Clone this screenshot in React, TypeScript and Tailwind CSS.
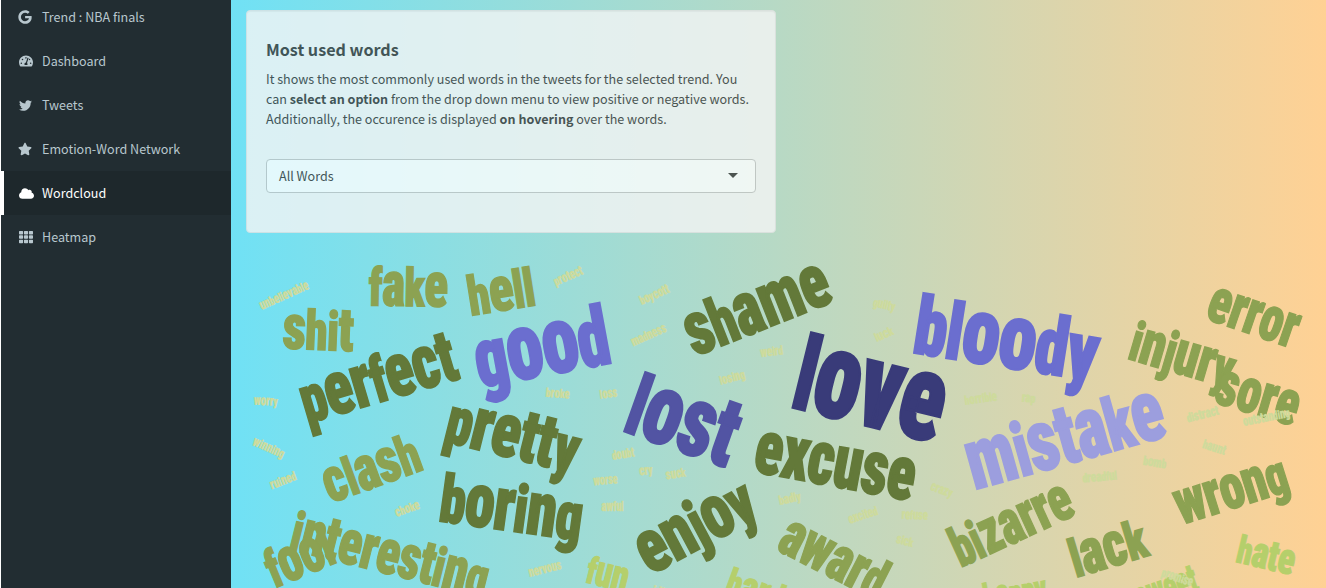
import React, { useLayoutEffect, useRef } from "react";
import { FaGoogle, FaTachometerAlt, FaTwitter, FaStar, FaCloud, FaTh } from "react-icons/fa";

const items = [
  { icon: FaGoogle, label: "Trend : NBA finals", iconClass: "h-[14px] w-[14px] mr-[10px] -ml-px" },
  { icon: FaTachometerAlt, label: "Dashboard", iconClass: "h-[14px] w-[14px] mr-[9px]" },
  { icon: FaTwitter, label: "Tweets", iconClass: "h-[13px] w-[13px] mr-[10px]" },
  { icon: FaStar, label: "Emotion-Word Network", iconClass: "h-[14px] w-[14px] mr-[10px] -ml-px" },
  { icon: FaCloud, label: "Wordcloud", active: true, iconClass: "h-[15px] w-[15px] mr-2" },
  { icon: FaTh, label: "Heatmap", iconClass: "h-[14px] w-[14px] mr-[9px]" },
];

// text, baseline start x / y, rotation in degrees, word length, ascender height, colour
type Word = [string, number, number, number, number, number, string];

const NAVY = "#393b79";
const INDIGO = "#5254a3";
const VIOLET = "#6b6ecf";
const LILAC = "#9c9ede";
const OLIVE = "#637939";
const MOSS = "#8ca252";
const LIME = "#b5cf6b";
const PALE = "#cedb9c";

const words: Word[] = [
  ["love", 791, 408.3, 13.8, 146, 78, NAVY],
  ["lost", 622.7, 432, 19.5, 108, 63.7, INDIGO],
  ["good", 481.9, 388, -10.5, 133, 60, VIOLET],
  ["bloody", 913, 353.7, 8.9, 182, 59.3, VIOLET],
  ["mistake", 976, 490.3, -15.6, 200, 55, LILAC],
  ["perfect", 309, 424, -16.5, 158, 48.5, OLIVE],
  ["shame", 696.3, 356.7, -21.5, 149, 48.5, OLIVE],
  ["pretty", 443.5, 442, 14, 132, 48.5, OLIVE],
  ["excuse", 753, 472.3, 10.5, 159, 48.5, OLIVE],
  ["boring", 439, 522, 7.8, 141, 48.5, OLIVE],
  ["enjoy", 651.5, 575.5, -28, 124, 48.5, OLIVE],
  ["fake", 370, 306, 1, 77, 40, MOSS],
  ["shit", 283.3, 349, 2.3, 69, 40, MOSS],
  ["hell", 472.3, 316, -9, 65, 40, MOSS],
  ["error", 1205, 319.2, 19, 90, 40, MOSS],
  ["injury", 1127.3, 359.3, 16.4, 104.5, 40, MOSS],
  ["sore", 1213.5, 403, 16.5, 82, 40, MOSS],
  ["clash", 331.8, 503.7, -20, 98.5, 40, MOSS],
  ["interesting", 289, 550, 14, 199, 40, MOSS],
  ["fool", 276, 588.5, -22.5, 67, 40, MOSS],
  ["award", 776, 550.5, 27, 111, 40, MOSS],
  ["bizarre", 962.3, 567.7, -24.6, 126, 40, MOSS],
  ["lack", 1077.3, 578, -16.8, 76, 40, MOSS],
  ["wrong", 1182.7, 525.2, -17.5, 113, 40, MOSS],
  ["hate", 1235.7, 562.3, 13.4, 57, 28, LIME],
  ["fun", 585, 582.7, 14, 41, 28, LIME],
  ["happy", 987, 612, -10, 62, 28, LIME],
  ["hard", 724, 594, 20, 57, 28, LIME],
  ["sweet", 1142, 612, -19, 62, 28, LIME],
  ["unbelievable", 262, 310, -24, 52, 9, PALE],
  ["worry", 254, 405, 2, 23.5, 9, PALE],
  ["winning", 252, 445, 24, 33, 9, PALE],
  ["ruined", 272, 489.5, -21, 27, 9, PALE],
  ["choke", 397, 517, -20, 25, 9, PALE],
  ["protect", 556, 286, -23, 30, 9, PALE],
  ["boycott", 642, 305, -24, 31, 9, PALE],
  ["madness", 633.5, 346.5, -24, 37, 9, PALE],
  ["broke", 545.7, 397, 4, 23.5, 9, PALE],
  ["loss", 600.7, 399, -8, 17, 9, PALE],
  ["doubt", 613, 460, -9, 22, 9, PALE],
  ["cry", 640, 475.7, -8, 13, 9, PALE],
  ["suck", 666.7, 479.5, -9, 19.5, 9, PALE],
  ["worse", 594, 485.5, -5, 24, 9, PALE],
  ["awful", 601.5, 511, 0, 22, 9, PALE],
  ["nervous", 530, 577, -14, 33, 9, PALE],
  ["idiot", 652, 594, 14, 22, 9, PALE],
  ["guilty", 872.7, 306.5, 13, 22, 9, PALE],
  ["luck", 877, 342, -24, 19, 9, PALE],
  ["weird", 761, 357.3, -7, 22.5, 9, PALE],
  ["losing", 721, 385, -15, 25.5, 9, PALE],
  ["badly", 780, 505, -12, 22, 9, PALE],
  ["excited", 850, 524, -18, 30, 9, PALE],
  ["refuse", 901.7, 519, 2, 26, 9, PALE],
  ["sick", 895.7, 543, 14, 17, 9, PALE],
  ["crazy", 930, 490, 20, 22, 9, PALE],
  ["horrible", 965.7, 405, -8, 32, 9, PALE],
  ["rap", 1021.7, 402, 4, 13, 9, PALE],
  ["dreadful", 1083, 482.7, -5, 34, 9, PALE],
  ["bomb", 1142.7, 465, 9, 23, 9, PALE],
  ["haunt", 1202, 448, 18, 23, 9, PALE],
  ["distract", 1188, 422.5, -14, 32, 9, PALE],
  ["outstanding", 1244, 426, -11, 47, 9, PALE],
  ["promise", 1160.7, 576.5, 18, 32, 9, PALE],
];

// Evens out ascenders and descenders against a tall x-height.
function letterScale(ch: string) {
  if ("lfk".includes(ch)) return 0.84;
  if ("bdhi".includes(ch)) return 0.87;
  if ("gpyj".includes(ch)) return 0.88;
  if (ch === "t") return 0.97;
  return 1;
}

function CloudWord({ word }: { word: Word }) {
  const [text, x, y, angle, length, ascender, color] = word;
  const size = ascender * 1.57;
  const inset = ascender * 0.035;
  const ref = useRef<SVGTextElement>(null);
  useLayoutEffect(() => {
    const el = ref.current;
    if (!el) return;
    const sx = (length + inset * 1.3) / el.getComputedTextLength();
    el.setAttribute("transform", `translate(${x} ${y}) rotate(${angle}) translate(${-inset} ${-ascender * 0.015}) scale(${sx} 1)`);
  });
  return (
    <text ref={ref} fill={color} stroke={color} strokeWidth={ascender * 0.035} letterSpacing={-ascender * 0.015}>
      {text.split("").map((ch, i) => (
        <tspan key={i} fontSize={size * letterScale(ch)}>
          {ch}
        </tspan>
      ))}
    </text>
  );
}

export default function App() {
  return (
    <div className="flex h-[588px] overflow-hidden bg-white pl-px font-['Noto_Sans_CJK_SC',sans-serif] text-[12.57px]">
      <nav className="-mt-[5px] w-[230px] shrink-0 bg-[#222d32]">
        {items.map(({ icon: Icon, label, active, iconClass }) => (
          <div
            key={label}
            className={
              active
                ? "flex h-11 items-center border-l-[3px] border-white bg-[#1e282c] pl-[15px] text-white"
                : "flex h-11 items-center border-l-[3px] border-transparent pl-[15px] text-[#b8c7ce]"
            }
          >
            <Icon className={iconClass} />
            {label}
          </div>
        ))}
      </nav>
      <main className="flex min-w-0 flex-1 flex-col bg-[linear-gradient(to_right,#70e1f5,#ffd194)] pt-[10px]">
        <section className="ml-[15px] h-[223px] w-[530px] shrink-0 rounded-[4px] border border-[#e3e3e3] bg-[#f5f5f5] p-[19px] text-[#333] opacity-80 shadow-[inset_0_1px_1px_rgba(0,0,0,0.05)]">
          <h4 className="mt-[9px] text-[16.15px] leading-5 font-bold">Most used words</h4>
          <p className="mt-[10px] leading-5">
            It shows the most commonly used words in the tweets for the selected trend. You can <b>select an option</b> from the drop
            down menu to view positive or negative words. Additionally, the occurence is displayed <b>on hovering</b> over the words.
          </p>
          <div className="mt-[30px] flex h-[34px] items-center justify-between rounded-[4px] border border-[#c3c3c3] bg-white pr-[17px] pl-3">
            <span>All Words</span>
            <svg width="10" height="5" viewBox="0 0 10 5" className="-mt-0.5">
              <path d="M0 0H10L5 5Z" fill="#333" />
            </svg>
          </div>
        </section>
        <svg
          viewBox="231 233 1095 355"
          className="h-[355px] w-[1095px] font-['Roboto',sans-serif] font-black [font-stretch:75%]"
        >
          {words.map((w) => (
            <CloudWord key={w[0]} word={w} />
          ))}
        </svg>
      </main>
    </div>
  );
}
